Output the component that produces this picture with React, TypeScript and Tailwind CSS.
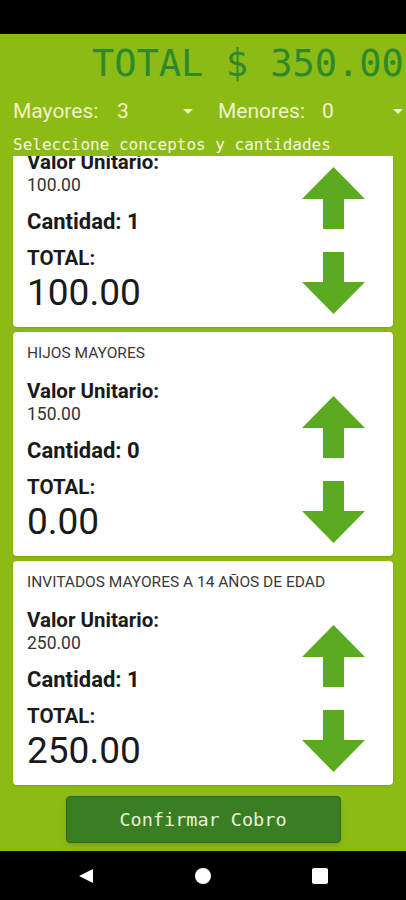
import React from 'react'

const mono = { fontFamily: '"DejaVu Sans Mono", "Liberation Mono", monospace' }
const roboto = { fontFamily: 'Roboto, "Noto Sans", Arial, sans-serif' }

type Item = { title: string; unit: string; qty: number; total: string }

const items: Item[] = [
  { title: 'HIJOS', unit: '100.00', qty: 1, total: '100.00' },
  { title: 'HIJOS MAYORES', unit: '150.00', qty: 0, total: '0.00' },
  { title: 'INVITADOS MAYORES A 14 AÑOS DE EDAD', unit: '250.00', qty: 1, total: '250.00' },
]

function ArrowUp() {
  return (
    <svg width="63" height="62" viewBox="0 0 63 62">
      <polygon points="31.5,0 63,32 42,32 42,62 21,62 21,32 0,32" fill="#5aab1f" />
    </svg>
  )
}

function ArrowDown() {
  return (
    <svg width="63" height="62" viewBox="0 0 63 62">
      <polygon points="21,0 42,0 42,30 63,30 31.5,62 0,30 21,30" fill="#5aab1f" />
    </svg>
  )
}

function Caret() {
  return (
    <svg width="10" height="6" viewBox="0 0 10 6">
      <polygon points="0,0 10,0 5,5" fill="#f1f3c8" />
    </svg>
  )
}

// tarjeta de concepto
function ConceptCard({ item, first }: { item: Item; first?: boolean }) {
  return (
    <div
      className={`flex h-[224px] shrink-0 flex-col rounded-[4px] bg-white pt-[12px] pl-[14px] pr-[28px] shadow-sm ${first ? '-mt-[53px]' : ''}`}
      style={roboto}
    >
      <div className="whitespace-nowrap text-[15.5px] leading-[18px] text-[#3a3a3a]">{item.title}</div>
      <div className="flex">
        <div className="flex flex-1 flex-col text-[#1a1a1a]">
          <div className="mt-[18px] text-[20.5px] font-bold leading-[22px]">Valor Unitario:</div>
          <div className="mt-[2px] text-[17.5px] leading-[20px] text-[#333]">{item.unit}</div>
          <div className="mt-[14px] text-[22px] font-bold leading-[26px]">Cantidad: {item.qty}</div>
          <div className="mt-[12px] text-[20.5px] font-bold leading-[22px]">TOTAL:</div>
          <div className="mt-[4px] text-[37px] leading-[40px]">{item.total}</div>
        </div>
        <div className="flex flex-col gap-[23px] pt-[34px]">
          <ArrowUp />
          <ArrowDown />
        </div>
      </div>
    </div>
  )
}

export default function App() {
  return (
    <div className="flex h-[900px] w-[406px] flex-col overflow-hidden bg-black">
      <div className="h-[34px] shrink-0 bg-black"></div>

      <div className="flex flex-1 flex-col bg-[#8dbb15]">
        <div
          className="h-[60px] overflow-hidden whitespace-nowrap pl-[92px] text-[37px] leading-[60px] text-[#2d8a2a]"
          style={mono}
        >
          TOTAL $ 350.00
        </div>

        <div className="flex h-[36px] items-center pl-[13px] text-[21px] text-[#f1f3c8]" style={roboto}>
          <div className="flex w-[205px] items-center">
            <span className="w-[104px]">Mayores:</span>
            <span className="w-[66px]">3</span>
            <Caret />
          </div>
          <div className="flex flex-1 items-center">
            <span className="w-[104px]">Menores:</span>
            <span className="w-[71px]">0</span>
            <Caret />
          </div>
        </div>

        <div className="h-[26px] pt-[5px] pl-[13px] text-[16px] leading-[20px] text-[#f4f6e4]" style={mono}>
          Seleccione conceptos y cantidades
        </div>

        <div className="flex h-[634px] flex-col gap-[5px] overflow-hidden px-[13px]">
          {items.map((it, i) => (
            <ConceptCard key={it.title} item={it} first={i === 0} />
          ))}
        </div>

        <div className="flex justify-center pt-[6px] pb-[8px]">
          <button
            className="h-[47px] w-[275px] rounded-[4px] border border-[#2c6a1c] bg-[#3a7e24] text-[18.5px] text-[#e8f2d0] shadow-md"
            style={mono}
          >
            Confirmar Cobro
          </button>
        </div>
      </div>

      <div className="flex h-[49px] shrink-0 items-center bg-black">
        <div className="flex w-full items-center justify-between pl-[78px] pr-[78px]">
          <svg width="16" height="16" viewBox="0 0 16 16">
            <polygon points="15,1 15,15 1,8" fill="#fff" />
          </svg>
          <div className="h-[16px] w-[16px] rounded-full bg-white"></div>
          <div className="h-[16px] w-[16px] rounded-[2px] bg-white"></div>
        </div>
      </div>
    </div>
  )
}
